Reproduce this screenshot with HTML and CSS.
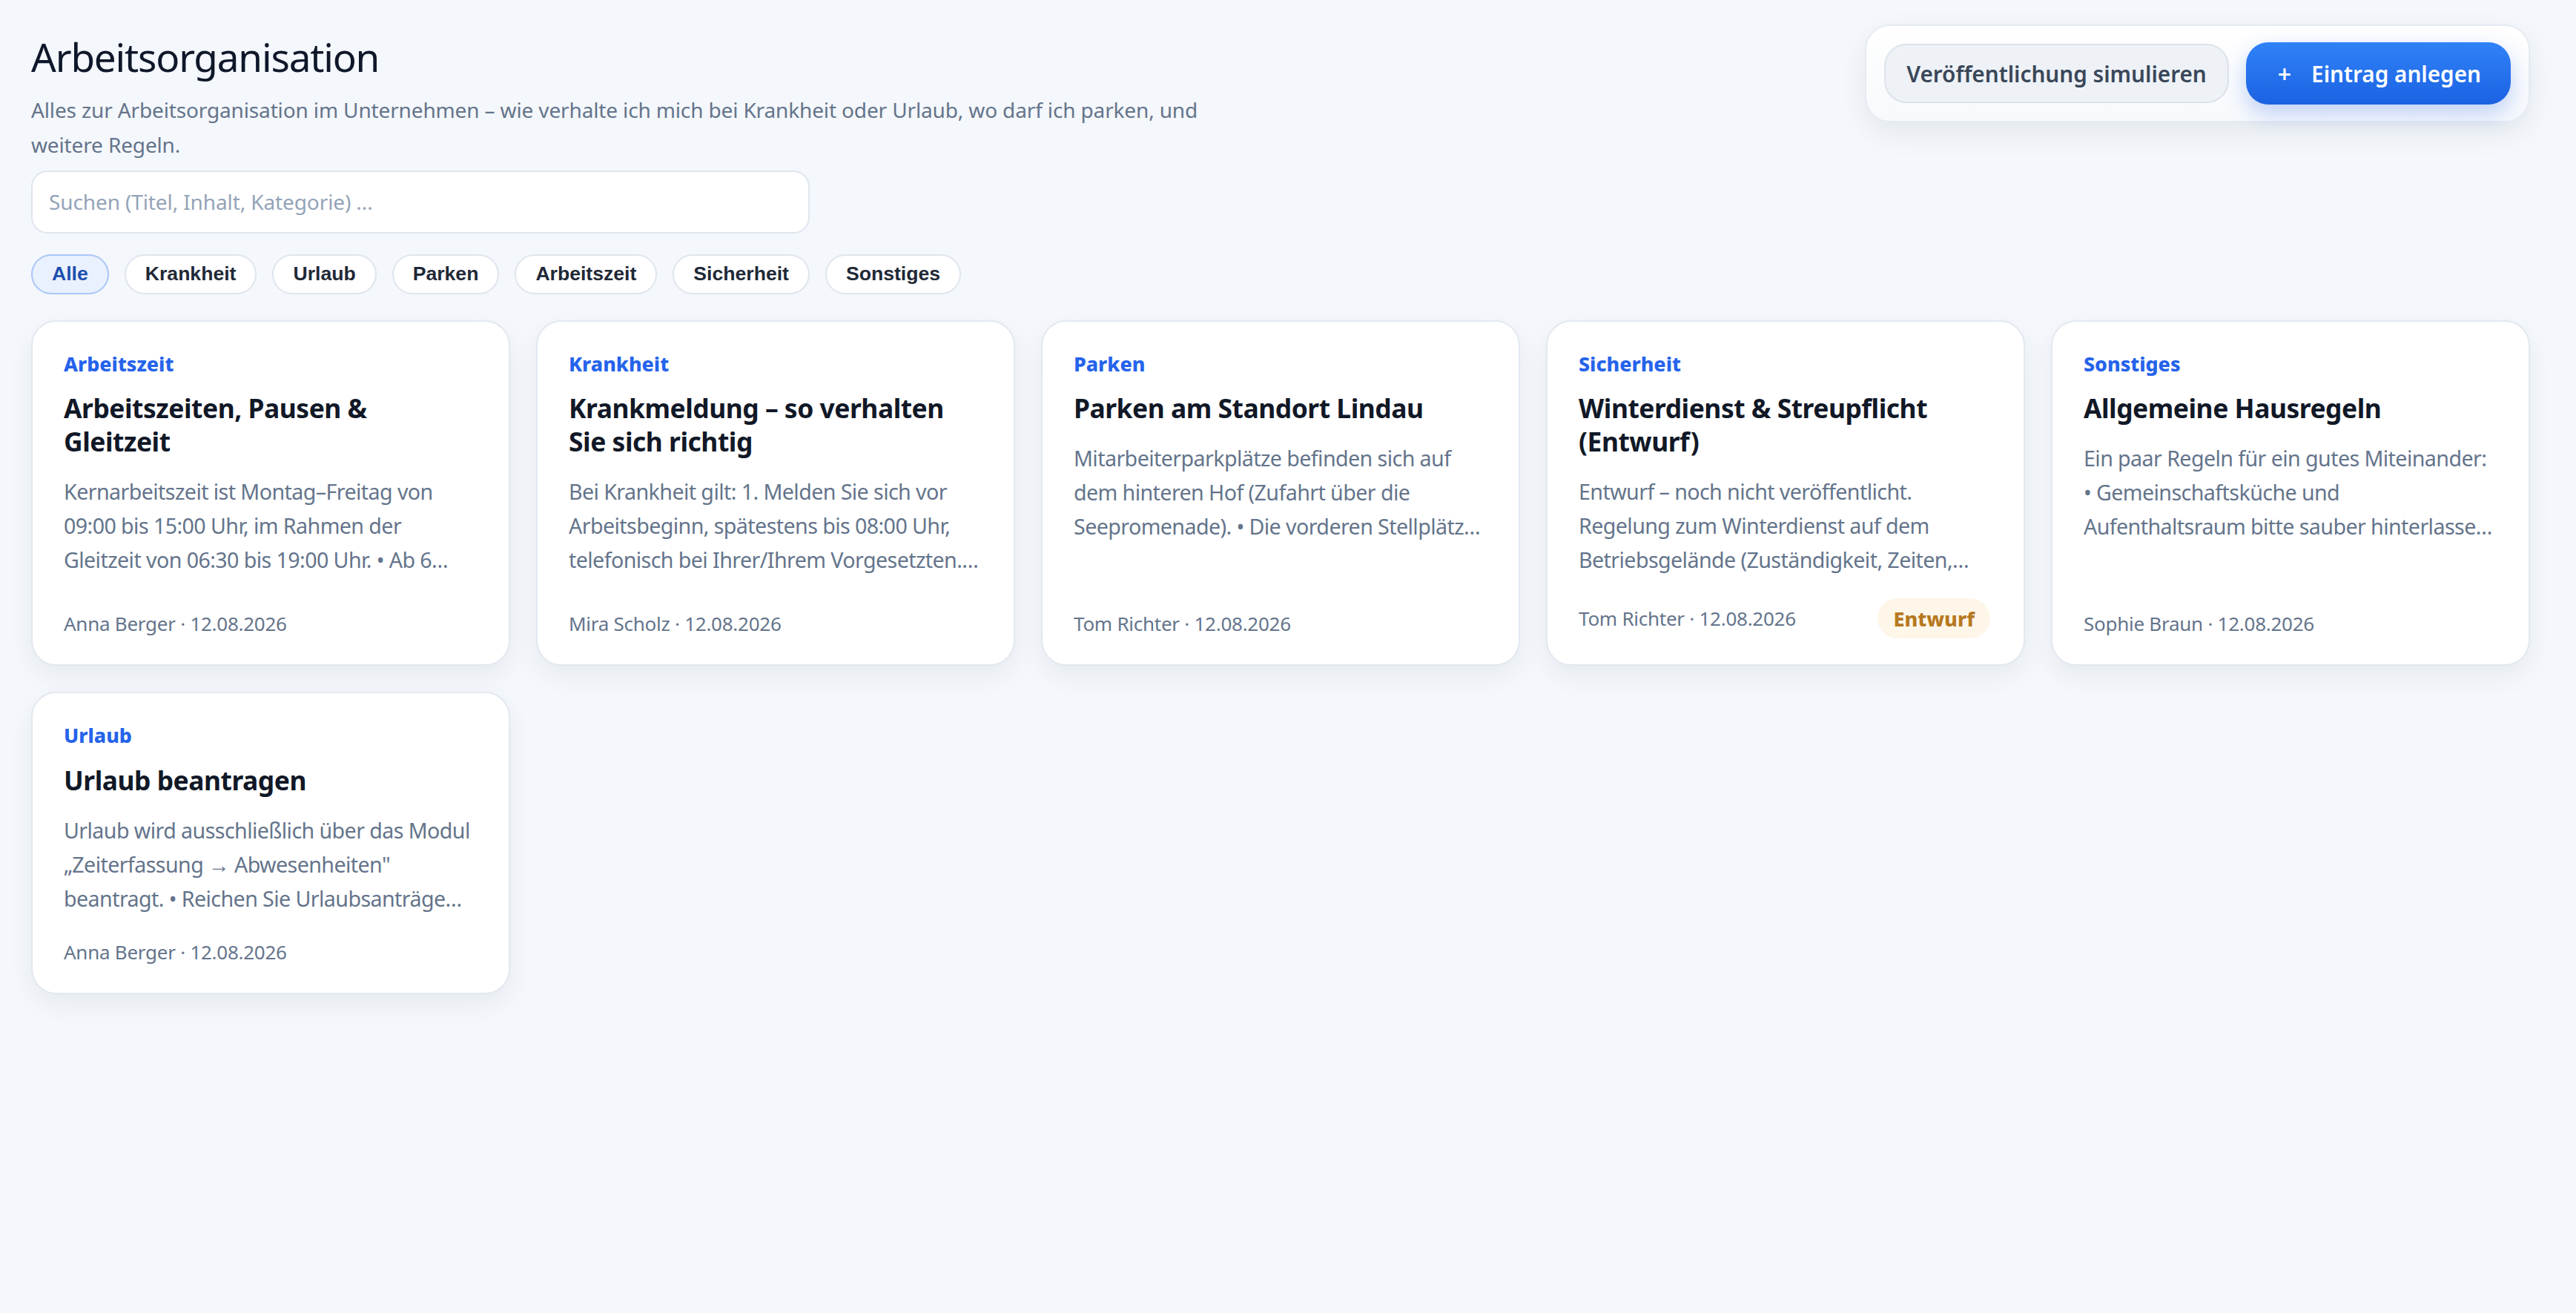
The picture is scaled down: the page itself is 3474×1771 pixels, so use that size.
FILE: index.html
```html
<!DOCTYPE html>
<html lang="de">
<head>
<meta charset="utf-8">
<title>Arbeitsorganisation</title>
<link rel="stylesheet" href="styles.css">
</head>
<body>
<main class="page">
  <header class="page-head">
    <div class="intro">
      <h1 class="page-title">Arbeitsorganisation</h1>
      <p class="page-lead">Alles zur Arbeitsorganisation im Unternehmen – wie verhalte ich mich bei Krankheit oder Urlaub, wo darf ich parken, und weitere Regeln.</p>
    </div>
    <div class="actions">
      <button class="btn btn-ghost" type="button">Veröffentlichung simulieren</button>
      <button class="btn btn-primary" type="button"><span class="btn-plus">+</span>Eintrag anlegen</button>
    </div>
  </header>

  <input class="search" type="search" placeholder="Suchen (Titel, Inhalt, Kategorie) ...">

  <nav class="filters">
    <button class="pill is-active" type="button">Alle</button>
    <button class="pill" type="button">Krankheit</button>
    <button class="pill" type="button">Urlaub</button>
    <button class="pill" type="button">Parken</button>
    <button class="pill" type="button">Arbeitszeit</button>
    <button class="pill" type="button">Sicherheit</button>
    <button class="pill" type="button">Sonstiges</button>
  </nav>

  <section class="grid">
    <article class="card">
      <div class="card-cat">Arbeitszeit</div>
      <h3 class="card-title">Arbeitszeiten, Pausen &amp; Gleitzeit</h3>
      <p class="card-text">Kernarbeitszeit ist Montag–Freitag von 09:00 bis 15:00 Uhr, im Rahmen der Gleitzeit von 06:30 bis 19:00 Uhr. • Ab 6 Stunden Arbeitszeit ist eine Pause von mindestens 30 Minuten einzulegen.</p>
      <div class="card-foot"><span class="card-meta">Anna Berger · 12.08.2026</span></div>
    </article>
    <article class="card">
      <div class="card-cat">Krankheit</div>
      <h3 class="card-title">Krankmeldung – so verhalten Sie sich richtig</h3>
      <p class="card-text">Bei Krankheit gilt: 1. Melden Sie sich vor Arbeitsbeginn, spätestens bis 08:00 Uhr, telefonisch bei Ihrer/Ihrem Vorgesetzten. Spätestens am dritten Krankheitstag ist eine Arbeitsunfähigkeitsbescheinigung vorzulegen.</p>
      <div class="card-foot"><span class="card-meta">Mira Scholz · 12.08.2026</span></div>
    </article>
    <article class="card">
      <div class="card-cat">Parken</div>
      <h3 class="card-title">Parken am Standort Lindau</h3>
      <p class="card-text">Mitarbeiterparkplätze befinden sich auf dem hinteren Hof (Zufahrt über die Seepromenade). • Die vorderen Stellplätze sind für Kunden und Besucher reserviert.</p>
      <div class="card-foot"><span class="card-meta">Tom Richter · 12.08.2026</span></div>
    </article>
    <article class="card">
      <div class="card-cat">Sicherheit</div>
      <h3 class="card-title">Winterdienst &amp; Streupflicht (Entwurf)</h3>
      <p class="card-text">Entwurf – noch nicht veröffentlicht. Regelung zum Winterdienst auf dem Betriebsgelände (Zuständigkeit, Zeiten, Streumittel).</p>
      <div class="card-foot"><span class="card-meta">Tom Richter · 12.08.2026</span><span class="badge">Entwurf</span></div>
    </article>
    <article class="card">
      <div class="card-cat">Sonstiges</div>
      <h3 class="card-title">Allgemeine Hausregeln</h3>
      <p class="card-text">Ein paar Regeln für ein gutes Miteinander: • Gemeinschaftsküche und Aufenthaltsraum bitte sauber hinterlassen. • Das letzte Licht macht aus.</p>
      <div class="card-foot"><span class="card-meta">Sophie Braun · 12.08.2026</span></div>
    </article>
    <article class="card">
      <div class="card-cat">Urlaub</div>
      <h3 class="card-title">Urlaub beantragen</h3>
      <p class="card-text">Urlaub wird ausschließlich über das Modul „Zeiterfassung → Abwesenheiten" beantragt. • Reichen Sie Urlaubsanträge mindestens zwei Wochen im Voraus ein.</p>
      <div class="card-foot"><span class="card-meta">Anna Berger · 12.08.2026</span></div>
    </article>
  </section>
</main>
</body>
</html>
```
FILE: styles.css
```css
* {
  box-sizing: border-box;
}

html,
body {
  margin: 0;
  min-height: 100%;
  background: #f4f7fb;
}

body {
  font-family: "Noto Sans", "Open Sans", sans-serif;
  color: #0f172a;
  letter-spacing: -0.012em;
}

.page {
  padding: 33px 62px 60px 42px;
}

/* header: intro text on the left, action panel on the right */
.page-head {
  display: flex;
  justify-content: space-between;
  align-items: flex-start;
}

.intro {
  max-width: 1600px;
}

.page-title {
  margin: 12px 0 0;
  font-size: 53px;
  font-weight: 400;
  line-height: 1.2;
  letter-spacing: -0.022em;
  color: #0f172a;
}

.page-lead {
  margin: 16px 0 0;
  font-size: 28px;
  line-height: 47px;
  letter-spacing: -0.005em;
  color: #64748b;
}

.actions {
  display: flex;
  align-items: center;
  gap: 23px;
  padding: 22px 24px;
  background: linear-gradient(#ffffff, #f7f9fc);
  border: 2px solid #e6ebf2;
  border-radius: 34px;
  box-shadow: 0 14px 40px rgba(15, 23, 42, 0.07);
}

.btn {
  font-family: inherit;
  letter-spacing: 0;
  font-size: 29.7px;
  font-weight: 600;
  border-radius: 30px;
  cursor: pointer;
  display: inline-flex;
  align-items: center;
}

.btn-ghost {
  height: 80px;
  padding: 0 28px;
  background: #eef2f7;
  border: 2px solid #dde3ec;
  color: #3a4759;
}

.btn-primary {
  height: 84px;
  padding: 0 40px 0 43px;
  border: 0;
  color: #ffffff;
  background: linear-gradient(#3082f8, #1b62e2);
  box-shadow: 0 12px 30px rgba(37, 99, 235, 0.28);
}

.btn-plus {
  margin-right: 27px;
  font-size: 32px;
}

/* search field */
.search {
  display: block;
  width: 1050px;
  height: 85px;
  margin-top: 11px;
  padding: 0 22px;
  font-family: inherit;
  font-size: 28px;
  letter-spacing: -0.004em;
  color: #0f172a;
  background: #ffffff;
  border: 2px solid #dfe5ee;
  border-radius: 22px;
  outline: none;
}

.search::placeholder {
  color: #94a3b8;
}

/* category filter pills */
.filters {
  display: flex;
  gap: 21px;
  margin-top: 28px;
}

.pill {
  height: 54px;
  padding: 0 26px;
  font-family: "Liberation Sans", Arial, sans-serif;
  font-size: 26.6px;
  font-weight: 700;
  letter-spacing: 0;
  color: #1f2937;
  background: #ffffff;
  border: 2px solid #dfe5ee;
  border-radius: 27px;
}

.pill.is-active {
  color: #1e4fae;
  background: #eaf1fe;
  border-color: #a9c6f6;
}

/* cards */
.grid {
  display: grid;
  grid-template-columns: repeat(5, 1fr);
  gap: 35px;
  margin-top: 35px;
  align-items: start;
}

.card {
  display: flex;
  flex-direction: column;
  align-self: stretch;
  padding: 40px 45px 35px 42px;
  background: #ffffff;
  border: 2px solid #e2e8f0;
  border-radius: 34px;
  box-shadow: 0 14px 36px rgba(15, 23, 42, 0.06);
}

.grid .card:nth-child(n+6) {
  align-self: start;
}

.card-cat {
  font-size: 26.8px;
  line-height: 1.3;
  font-weight: 800;
  letter-spacing: 0;
  color: #2563eb;
}

.card-title {
  margin: 20px 0 0;
  font-size: 35.4px;
  line-height: 45px;
  font-weight: 700;
  letter-spacing: -0.013em;
  color: #111827;
}

.card-text {
  margin: 22px 0 29px;
  font-size: 28.6px;
  line-height: 46px;
  letter-spacing: -0.02em;
  color: #64748b;
  display: -webkit-box;
  -webkit-line-clamp: 3;
  -webkit-box-orient: vertical;
  overflow: hidden;
}

.card-foot {
  margin-top: auto;
  display: flex;
  align-items: center;
  justify-content: space-between;
}

.card-meta {
  font-size: 26px;
  line-height: 40px;
  letter-spacing: -0.01em;
  color: #64748b;
}

.badge {
  height: 54px;
  padding: 0 21px;
  display: inline-flex;
  align-items: center;
  font-size: 27px;
  font-weight: 800;
  letter-spacing: 0;
  color: #b7791f;
  background: #fdf6e9;
  border-radius: 27px;
}
```
